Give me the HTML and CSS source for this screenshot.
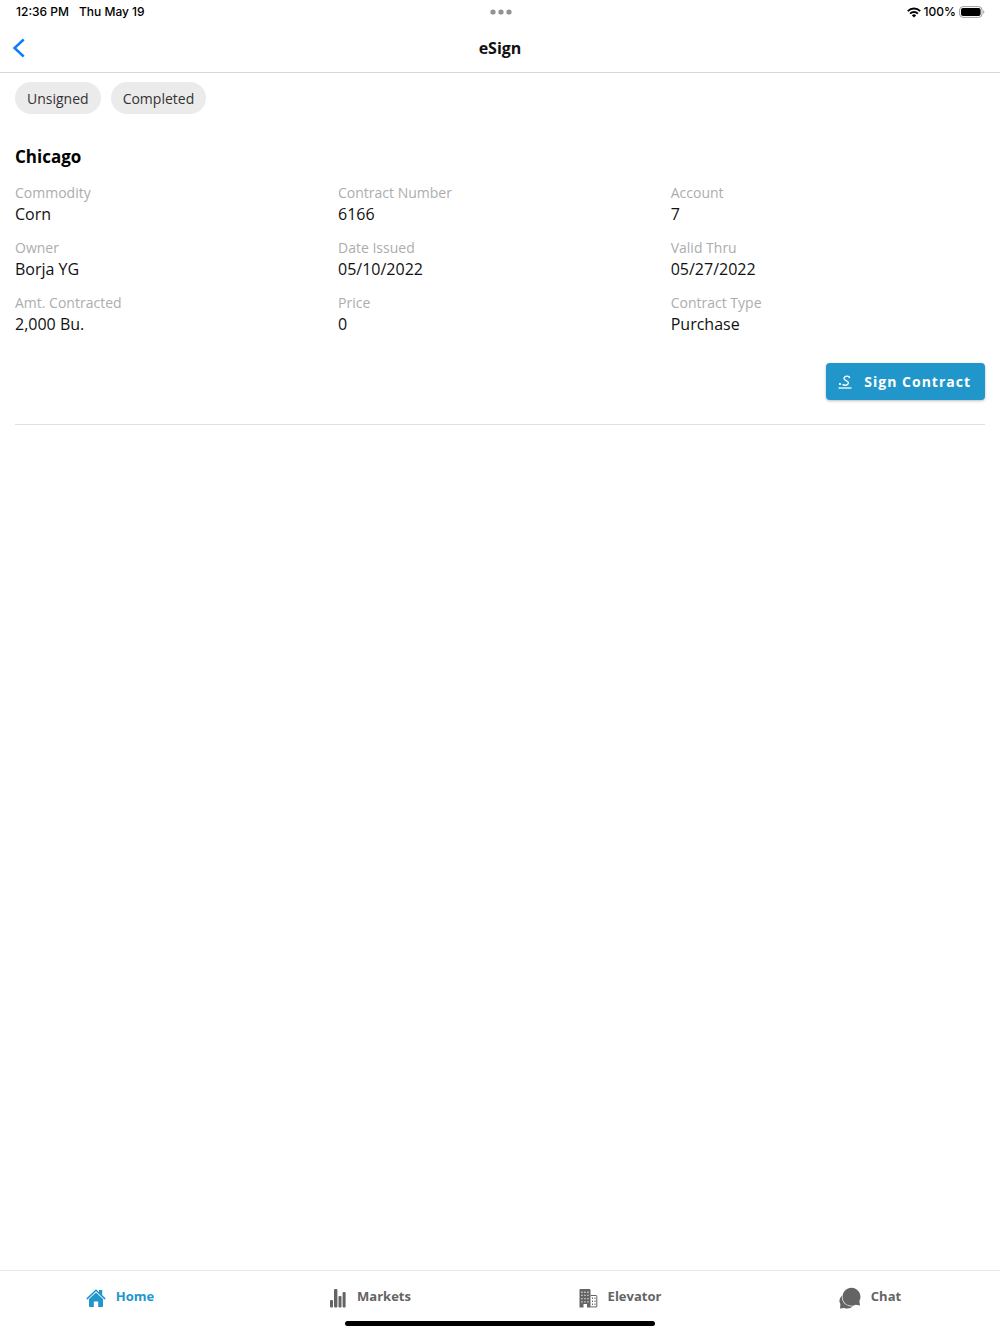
FILE: index.html
```html
<!DOCTYPE html>
<html lang="en">
<head>
<meta charset="utf-8">
<meta name="viewport" content="width=device-width, initial-scale=1">
<title>eSign</title>
<link rel="stylesheet" href="styles.css">
</head>
<body>
<div class="status">
  <div class="status-time"><span>12:36 PM</span><span>Thu May 19</span></div>
  <svg class="dots" width="22" height="6" viewBox="0 0 22 6" aria-hidden="true"><circle cx="3" cy="3" r="2.6"/><circle cx="11" cy="3" r="2.6"/><circle cx="19" cy="3" r="2.6"/></svg>
  <div class="status-power">
    <svg width="14" height="11" viewBox="0 0 14 11" aria-hidden="true"><g fill="none" stroke="#000" stroke-width="1.9"><path d="M.8 4.1a8.8 8.8 0 0 1 12.4 0"/><path d="M3.1 6.6a5.5 5.5 0 0 1 7.8 0"/></g><path d="M4.9 8.4a3 3 0 0 1 4.2 0L7 10.6z"/></svg>
    <span>100%</span>
    <svg width="26" height="12" viewBox="0 0 26 12" aria-hidden="true"><rect x=".6" y=".6" width="22.4" height="10.8" rx="3.4" fill="none" stroke="#a0a0a0"/><rect x="2" y="2" width="19.6" height="8" rx="2"/><path d="M24.2 4.2q1.2.5 1.2 1.8t-1.2 1.8z" fill="#a0a0a0"/></svg>
  </div>
</div>
<header class="header">
  <button class="back" type="button" aria-label="Back"><svg width="13" height="20" viewBox="0 0 13 20" aria-hidden="true"><path d="M11.700 1.500 2.500 10l9.200 8.500" fill="none" stroke="#0a7cff" stroke-width="2.400"/></svg></button>
  <h1 class="title">eSign</h1>
</header>
<main class="main">
  <div class="filters">
    <button class="chip" type="button">Unsigned</button>
    <button class="chip" type="button">Completed</button>
  </div>
  <section class="contract">
    <h2 class="place">Chicago</h2>
    <dl class="details">
      <div><dt>Commodity</dt><dd>Corn</dd></div>
      <div><dt>Contract Number</dt><dd>6166</dd></div>
      <div><dt>Account</dt><dd>7</dd></div>
      <div><dt>Owner</dt><dd>Borja YG</dd></div>
      <div><dt>Date Issued</dt><dd>05/10/2022</dd></div>
      <div><dt>Valid Thru</dt><dd>05/27/2022</dd></div>
      <div><dt>Amt. Contracted</dt><dd>2,000 Bu.</dd></div>
      <div><dt>Price</dt><dd>0</dd></div>
      <div><dt>Contract Type</dt><dd>Purchase</dd></div>
    </dl>
    <button class="sign" type="button">
      <svg width="14" height="14" viewBox="0 0 14 14" aria-hidden="true"><g fill="none" stroke="#fff"><path d="M.5 13h13" stroke-width="1.3"/><path d="M11.500 3.200c.4-2.800-5-2.800-5.500.2-.4 2.500 4.800 1.900 4.400 4.700-.4 2.400-4.300 2.800-5.900 1.100" stroke-width="1.400"/><path d="m1 8 2 2m0-2-2 2" stroke-width=".9"/></g></svg>
      Sign Contract
    </button>
  </section>
</main>
<footer class="footer">
  <nav class="tabs">
    <a class="tab active" href="#home"><svg width="20" height="20" viewBox="0 0 20 20" aria-hidden="true"><path d="M10 4.600 17 11v7.200q0 .8-.8.8H12.200v-5.500H7.800V19H3.800q-.8 0-.8-.8V11z"/><path d="M1.200 10.600 10 2.200l8.800 8.400" fill="none" stroke="currentColor" stroke-width="1.500" stroke-linecap="round"/><path d="M13 2h3.200v6L13 5z"/></svg><span>Home</span></a>
    <a class="tab" href="#markets"><svg width="18" height="20" viewBox="0 0 18 20" aria-hidden="true"><rect x="1" y="12" width="3" height="7.500" rx="1"/><rect x="5" y="1" width="3.400" height="18.500" rx="1"/><rect x="9.500" y="8" width="3" height="11.500" rx="1"/><rect x="13.600" y="4" width="3" height="15.500" rx="1"/></svg><span>Markets</span></a>
    <a class="tab" href="#elevator"><svg width="19" height="20" viewBox="0 0 19 20" aria-hidden="true"><path d="M1.500 1h9q1 0 1 1v17.500H8V16H4.500v3.500h-4V2q0-1 1-1z"/><path d="M11.500 7.500H17q.8 0 .8.800v10.600h-6.300" fill="none" stroke="currentColor"/><path fill="#ddd" d="M2.300 3.600h1.300v1.300H2.300zm3 0h1.300v1.300H5.300zm3 0h1.300v1.300H8.300zM2.300 6.800h1.300v1.300H2.300zm3 0h1.300v1.300H5.300zm3 0h1.300v1.300H8.300zM2.300 10h1.300v1.300H2.300zm3 0h1.300v1.300H5.300zm3 0h1.300v1.300H8.300zM2.300 13.200h1.300v1.300H2.300zm3 0h1.300v1.300H5.300zm3 0h1.300v1.300H8.300z"/><path d="M13 9.500h1V11h-1zm2.500 0h1V11h-1zM13 12.500h1V14h-1zm2.500 0h1V14h-1zM13 15.500h1V17h-1zm2.500 0h1V17h-1z"/></svg><span>Elevator</span></a>
    <a class="tab" href="#chat"><svg width="22" height="22" viewBox="0 0 22 22" aria-hidden="true"><path d="M4.200 8C1 9.800-.8 13.700 1.400 17L1 21.500l4.200-.6c3 1.200 6.400.8 8.600-1.600z"/><path d="M12.500.8a9 9 0 1 0 4.300 16.900l4.200.9-.6-4.500A9 9 0 0 0 12.500.8z" stroke="#fff" stroke-width="1.200" paint-order="stroke"/></svg><span>Chat</span></a>
  </nav>
  <div class="home-bar"></div>
</footer>
</body>
</html>
```
FILE: styles.css
```css
* { box-sizing: border-box; }
body {
  margin: 0;
  min-height: 100vh;
  display: flex;
  flex-direction: column;
  background: #fff;
  color: #111;
  font-family: "Open Sans", "Noto Sans", sans-serif;
}
button { font: inherit; border: 0; cursor: pointer; }
.status {
  display: grid;
  grid-template-columns: 1fr auto 1fr;
  align-items: center;
  height: 24px;
  padding: 0 15px 0 16px;
  color: #000;
  font: 500 12px/24px Inter, sans-serif;
}
.status-time { display: flex; gap: 10px; }
.dots { fill: #929292; }
.status-power { display: flex; justify-content: flex-end; align-items: center; gap: 3px; }
.header {
  display: grid;
  grid-template-columns: 1fr auto 1fr;
  align-items: center;
  height: 49px;
  padding: 0 12px;
  border-bottom: 1px solid #d8d8d8;
}
.back { display: flex; justify-self: start; padding: 0; background: none; }
.title { margin: 0; font-size: 16px; line-height: 24px; font-weight: 700; }
.main { flex: 1; padding: 9px 15px; }
.filters { display: flex; gap: 10px; }
.chip {
  padding: 2px 12px 0;
  border-radius: 16px;
  background: #ebebeb;
  color: #333;
  font-size: 14px;
  line-height: 30px;
}
.contract {
  display: flex;
  flex-direction: column;
  padding: 31px 0 24px;
  border-bottom: 1px solid #e0e0e0;
}
.place { margin: 0; color: #000; font-size: 17px; line-height: 24px; font-weight: 700; }
.details {
  display: grid;
  grid-template-columns: 33.3% 34.3% 1fr;
  row-gap: 13px;
  margin: 14px 0 28px;
}
.details dt { color: #adadad; font-size: 14px; line-height: 20px; }
.details dd { margin: 0; color: #111; font-size: 16px; line-height: 22px; }
.sign {
  display: flex;
  align-items: center;
  align-self: flex-end;
  gap: 12px;
  height: 37px;
  padding: 0 14px 0 12px;
  border-radius: 4px;
  background: #2196cb;
  box-shadow: 0 1px 3px #0004;
  color: #fff;
  font-size: 14px;
  font-weight: 700;
  letter-spacing: 1px;
}
.footer { padding-bottom: 8px; border-top: 1px solid #e6e6e6; }
.tabs { display: grid; grid-template-columns: repeat(4, 1fr); }
.tab {
  display: flex;
  align-items: center;
  justify-content: center;
  gap: 10px;
  height: 50px;
  padding-right: 10px;
  color: #646464;
  font-size: 13px;
  line-height: 20px;
  font-weight: 700;
  text-decoration: none;
}
.tab svg { fill: currentColor; margin-top: 4px; }
.active { color: #2196cb; }
.home-bar { width: 31%; height: 5px; margin: 0 auto; border-radius: 3px; background: #000; }
```
